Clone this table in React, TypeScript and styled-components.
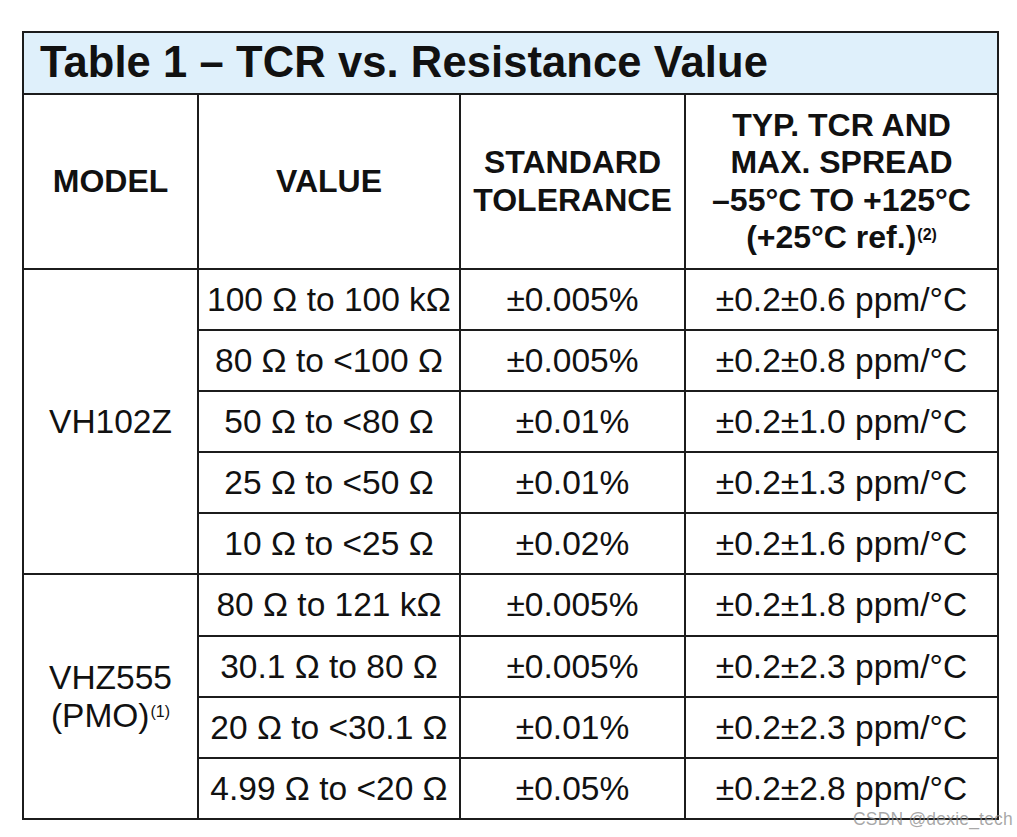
import styled, { createGlobalStyle } from "styled-components";

const GlobalStyle = createGlobalStyle`
  html, body {
    margin: 0;
    padding: 0;
    background: #ffffff;
  }
  body {
    font-family: "Liberation Sans", Arial, Helvetica, sans-serif;
    color: #111111;
  }
`;

const Page = styled.div`
  position: relative;
  width: 1017px;
  height: 837px;
  padding: 31px 0 0 22px;
  box-sizing: border-box;
`;

const Table = styled.table`
  border-collapse: collapse;
  table-layout: fixed;
  width: 975px;
  border: 2px solid #1c1c1c;
`;

const TitleCell = styled.th`
  height: 60px;
  padding: 0 0 0 16px;
  background: #dff0fb;
  border: 2px solid #1c1c1c;
  text-align: left;
  font-size: 43.5px;
  font-weight: 700;
  letter-spacing: 0.1px;
  line-height: 1;
`;

const HeadCell = styled.th`
  height: 173px;
  padding: 0;
  border: 2px solid #1c1c1c;
  text-align: center;
  vertical-align: middle;
  font-size: 32px;
  font-weight: 700;
  line-height: 37.5px;
`;

const Cell = styled.td<{ $h?: number }>`
  height: ${(p) => p.$h ?? 59}px;
  padding: 0;
  border: 2px solid #1c1c1c;
  text-align: center;
  vertical-align: middle;
  font-size: 33.5px;
  line-height: 1;
  white-space: nowrap;
`;

const ModelCell = styled(Cell)`
  line-height: 38px;
`;

const Sup = styled.sup`
  font-size: 16px;
  vertical-align: top;
  position: relative;
  top: -4px;
  margin-left: 1px;
`;

const HeadSup = styled.sup`
  font-size: 16px;
  vertical-align: top;
  position: relative;
  top: -3px;
  margin-left: 1px;
`;

const Watermark = styled.div`
  position: absolute;
  right: 4px;
  bottom: 7px;
  font-family: "Liberation Sans", Arial, sans-serif;
  font-size: 17.5px;
  color: rgba(140, 140, 140, 0.75);
  letter-spacing: 0.2px;
`;

type Row = { value: string; tol: string; tcr: string };

const groups: { model: React.ReactNode; rows: Row[] }[] = [
  {
    model: "VH102Z",
    rows: [
      { value: "100 Ω to 100 kΩ", tol: "±0.005%", tcr: "±0.2±0.6 ppm/°C" },
      { value: "80 Ω to <100 Ω", tol: "±0.005%", tcr: "±0.2±0.8 ppm/°C" },
      { value: "50 Ω to <80 Ω", tol: "±0.01%", tcr: "±0.2±1.0 ppm/°C" },
      { value: "25 Ω to <50 Ω", tol: "±0.01%", tcr: "±0.2±1.3 ppm/°C" },
      { value: "10 Ω to <25 Ω", tol: "±0.02%", tcr: "±0.2±1.6 ppm/°C" },
    ],
  },
  {
    model: (
      <>
        VHZ555
        <br />
        (PMO)<Sup>(1)</Sup>
      </>
    ),
    rows: [
      { value: "80 Ω to 121 kΩ", tol: "±0.005%", tcr: "±0.2±1.8 ppm/°C" },
      { value: "30.1 Ω to 80 Ω", tol: "±0.005%", tcr: "±0.2±2.3 ppm/°C" },
      { value: "20 Ω to <30.1 Ω", tol: "±0.01%", tcr: "±0.2±2.3 ppm/°C" },
      { value: "4.99 Ω to <20 Ω", tol: "±0.05%", tcr: "±0.2±2.8 ppm/°C" },
    ],
  },
];

export default function App() {
  return (
    <>
      <GlobalStyle />
      <Page>
        <Table>
          <colgroup>
            <col style={{ width: 175 }} />
            <col style={{ width: 262 }} />
            <col style={{ width: 225 }} />
            <col style={{ width: 313 }} />
          </colgroup>
          <thead>
            <tr>
              <TitleCell colSpan={4}>Table 1 – TCR vs. Resistance Value</TitleCell>
            </tr>
            <tr>
              <HeadCell>MODEL</HeadCell>
              <HeadCell>VALUE</HeadCell>
              <HeadCell>
                STANDARD
                <br />
                TOLERANCE
              </HeadCell>
              <HeadCell>
                TYP. TCR AND
                <br />
                MAX. SPREAD
                <br />
                –55°C TO +125°C
                <br />
                (+25°C ref.)<HeadSup>(2)</HeadSup>
              </HeadCell>
            </tr>
          </thead>
          <tbody>
            {groups.map((g, gi) =>
              g.rows.map((r, i) => (
                <tr key={`${gi}-${i}`}>
                  {i === 0 && <ModelCell rowSpan={g.rows.length}>{g.model}</ModelCell>}
                  <Cell $h={gi === 1 && i === 0 ? 60 : 59}>{r.value}</Cell>
                  <Cell>{r.tol}</Cell>
                  <Cell>{r.tcr}</Cell>
                </tr>
              )),
            )}
          </tbody>
        </Table>
        <Watermark>CSDN @dexie_tech</Watermark>
      </Page>
    </>
  );
}
